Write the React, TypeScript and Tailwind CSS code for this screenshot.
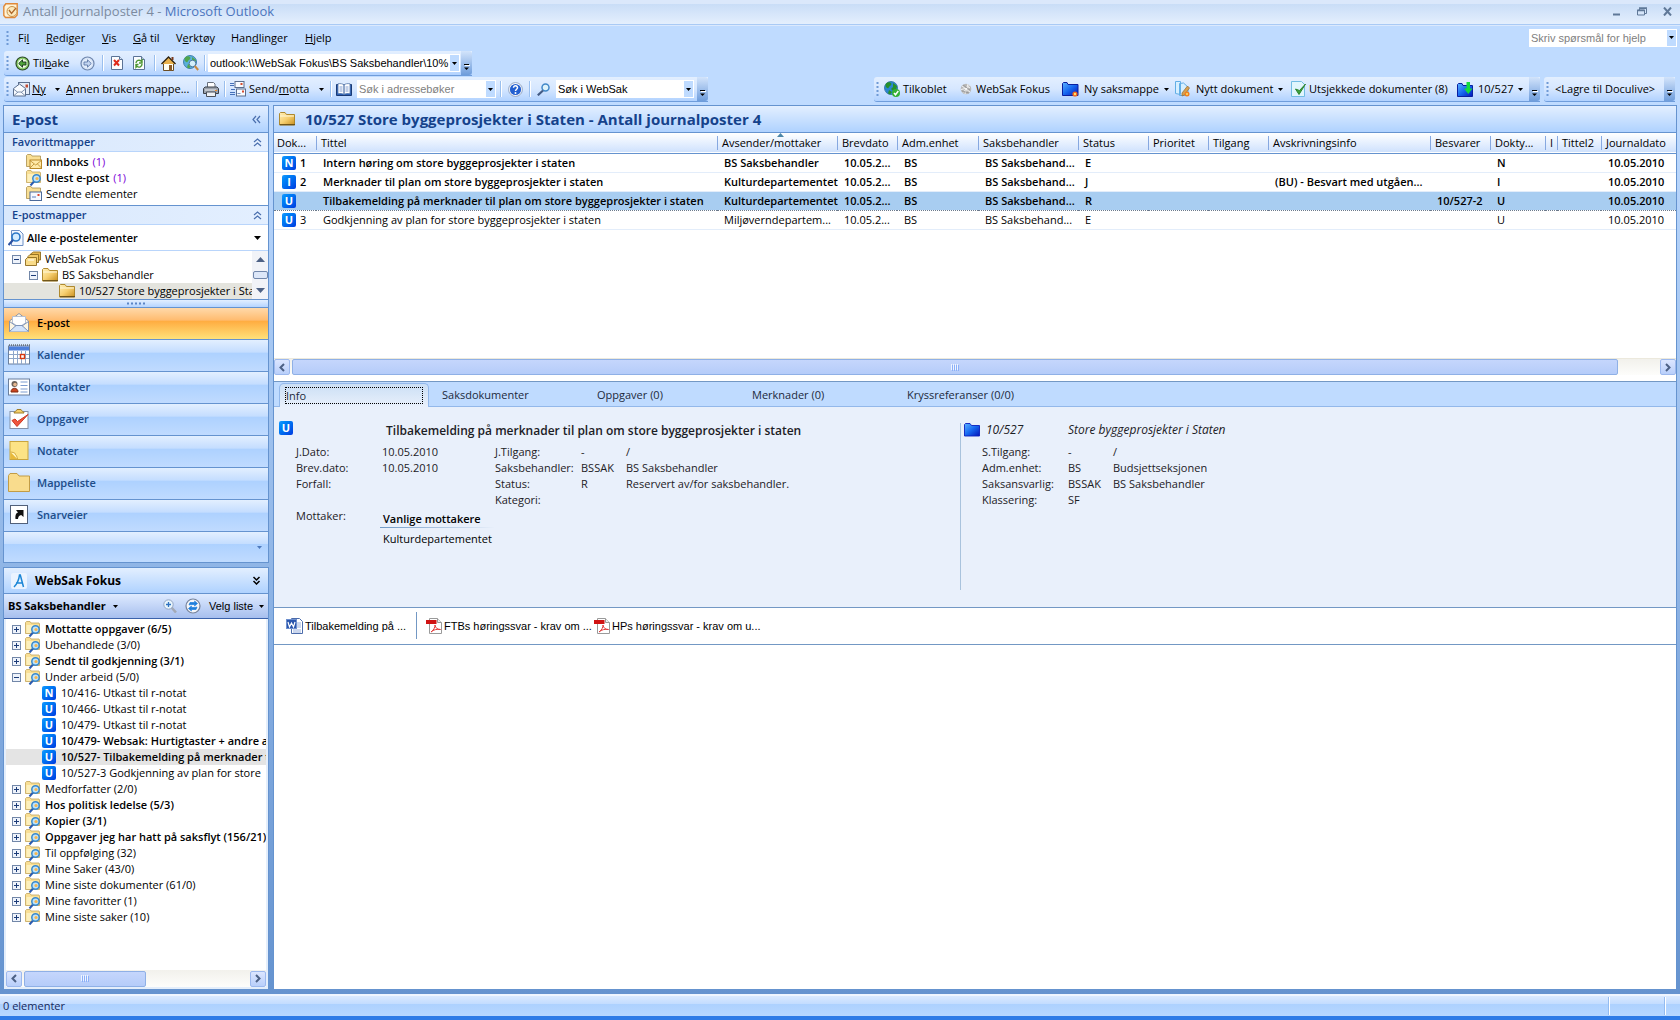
import type { ReactNode } from 'react';

const FolderIcon = ({ blue = false }: { blue?: boolean }) => (
  <svg width="16" height="16" viewBox="0 0 16 16" className="shrink-0">
    <defs>
      <linearGradient id={blue ? 'fb' : 'fy'} x1="0" y1="0" x2="1" y2="1">
        <stop offset="0" stopColor={blue ? '#5db4ff' : '#fff0b8'} />
        <stop offset="0.5" stopColor={blue ? '#1668f0' : '#f6cf70'} />
        <stop offset="1" stopColor={blue ? '#0414b8' : '#c98f1e'} />
      </linearGradient>
    </defs>
    <path
      d="M.5 14V2.5L1.5 1.500h4.500l1.500 2h8v10.500z"
      fill={blue ? 'url(#fb)' : 'url(#fy)'}
      stroke={blue ? '#0a1fc0' : '#a8801f'}
      strokeWidth="0.9"
    />
    {!blue && <path d="M1 5h14" stroke="#fff7d8" />}
    {!blue && <path d="M1 13.700h15" stroke="#5d4610" />}
  </svg>
);

const SearchFolderIcon = () => (
  <svg width="16" height="16" viewBox="0 0 16 16" className="shrink-0">
    <path d="M.5 12.500v-11l1-1H5l1 1.500h8l.5 1v9.500z" fill="#f9df94" stroke="#c2a45a" strokeWidth="0.8" />
    <path d="M1.500 4h11v8h-11z" fill="#fdf0bd" />
    <path d="M8 11.500l-3.500 4" stroke="#2c5bb0" strokeWidth="2" />
    <circle cx="10.500" cy="8.500" r="3.700" fill="#bfe3fb" stroke="#3788cc" strokeWidth="1.500" />
    <circle cx="11" cy="8.500" r="1.600" fill="#f7b64c" />
  </svg>
);

const MailFolderIcon = ({ sent = false }: { sent?: boolean }) => (
  <svg width="16" height="16" viewBox="0 0 16 16" className="shrink-0">
    <path d="M.5 12.500v-11l1-1H5l1 1.500h8.500V12.500z" fill="#f9df94" stroke="#a98f4c" strokeWidth="0.8" />
    <rect x="4" y="6" width="11.500" height="8.500" fill={sent ? '#f6f9ff' : '#ffe9a8'} stroke={sent ? '#4d6b9a' : '#b98a2a'} />
    {sent ? (
      <>
        <path d="M6 11h4" stroke="#5a7fc0" />
        <rect x="11.500" y="8" width="2" height="2" fill="#e0462c" />
      </>
    ) : (
      <path d="M4 6.500l5.700 4.500 5.700-4.500M4 14l4-4M15.500 14l-4-4" fill="none" stroke="#b98a2a" strokeWidth="0.8" />
    )}
  </svg>
);

const StackIcon = () => (
  <svg width="16" height="16" viewBox="0 0 16 16" className="shrink-0">
    <path d="M5.500 9V3l3-2H15.500V9z" fill="#e9b94f" stroke="#8d6b1e" strokeWidth="0.9" />
    <path d="M3 11.500v-6l2-2h8.500v8z" fill="#f2ca68" stroke="#8d6b1e" strokeWidth="0.9" />
    <path d="M.5 14.500v-6l2-2h9v8z" fill="#f9dc8a" stroke="#8d6b1e" strokeWidth="0.9" />
    <path d="M3 9h6" stroke="#fff" />
  </svg>
);

const PageSearchIcon = () => (
  <svg width="16" height="16" viewBox="0 0 16 16" className="shrink-0">
    <path d="M3.500.5h8l3.500 3.500v11.500H3.500z" fill="#f2f7ff" stroke="#6d8fc4" />
    <circle cx="8" cy="7" r="4" fill="#d4ecff" stroke="#2c78c8" strokeWidth="1.600" />
    <path d="M5 10l-4.500 5" stroke="#2b50a0" strokeWidth="2.200" />
  </svg>
);

const BackIcon = ({ forward = false }: { forward?: boolean }) => (
  <svg width="15" height="15" viewBox="0 0 15 15" className="shrink-0">
    <circle cx="7.500" cy="7.500" r="6.500" fill={forward ? '#d7e4f7' : '#8ccf6c'} stroke={forward ? '#6f86ad' : '#2c4a26'} strokeWidth="1.200" />
    <circle cx="7.500" cy="7.500" r="4.600" fill={forward ? '#e4eefb' : '#f1fbe9'} />
    <path
      d={forward ? 'M4 6h3.500V3.800L11.300 7.500 7.500 11.200V9H4z' : 'M11 6H7.500V3.800L3.700 7.500 7.500 11.200V9H11z'}
      fill={forward ? '#c3d5f0' : '#4fa53a'}
      stroke={forward ? '#5d78a8' : '#16321a'}
      strokeWidth="0.9"
    />
  </svg>
);

const PageIcon = ({ kind }: { kind: 'stop' | 'refresh' }) => (
  <svg width="12" height="14" viewBox="0 0 12 14" className="shrink-0">
    <path d="M.5.5h8l3 3v10H.5z" fill="#fbfdff" stroke="#5b7396" />
    <path d="M8.500.5v3h3" fill="#d8e5f6" stroke="#5b7396" />
    {kind === 'stop' ? (
      <path d="M3 4l5 5.500M8 4L3 9.500" stroke="#df2a1b" strokeWidth="2" />
    ) : (
      <path d="M3 7a3 3 0 0 1 5-2l1-1v3H6M9 8a3 3 0 0 1-5 2.300l-1 1V8.500h2.500" fill="none" stroke="#4f9630" strokeWidth="1.400" />
    )}
  </svg>
);

const HouseIcon = () => (
  <svg width="15" height="15" viewBox="0 0 15 15" className="shrink-0">
    <path d="M2.500 7.500h10v7h-10z" fill="#fffef2" stroke="#6b4d23" />
    <path d="M.5 8L7.500 1 14.500 8" fill="#e9b14d" stroke="#2e2412" strokeWidth="1.400" />
    <path d="M10.500 1h2v3h-2z" fill="#7c3b1c" />
    <path d="M8 9h3v5.500H8z" fill="#8b5b28" />
  </svg>
);

const GlobeIcon = ({ check = false }: { check?: boolean }) => (
  <svg width="16" height="16" viewBox="0 0 16 16" className="shrink-0">
    <circle cx="7" cy="7" r="6.500" fill={check ? '#2a86d0' : '#5ab0dc'} stroke="#2a6b9c" strokeWidth="0.8" />
    <path d="M2 2.500C4 .5 7 1 7.500 3 7 5 5 5 4.500 7c-1 1-3-1-3-3zM9 2l4 3-1 4-3 1-2-2 2-2zM5 9l3 2-2 2.500-2-1z" fill={check ? '#26902b' : '#51a64c'} />
    {check ? (
      <>
        <circle cx="12" cy="12" r="4" fill="#34b134" />
        <path d="M10 12l1.500 1.800L14.300 10" fill="none" stroke="#fff" strokeWidth="1.500" />
      </>
    ) : (
      <>
        <circle cx="9.500" cy="8.500" r="3.300" fill="#d4f0fa" stroke="#4f7ba5" />
        <path d="M11.800 11l3.400 4" stroke="#c98a3f" strokeWidth="2" />
      </>
    )}
  </svg>
);

const NewMailIcon = () => (
  <svg width="17" height="15" viewBox="0 0 17 15" className="shrink-0">
    <rect x="5.500" y=".5" width="11" height="12" fill="#e4edf9" stroke="#5b6f8e" />
    <rect x="12.500" y="2.500" width="2.500" height="3" fill="#c24c33" />
    <path d="M.5 6.500L6.500 2l6 4.500v7.500H.5z" fill="#f8fbff" stroke="#5b6f8e" />
    <path d="M.5 14l4.500-4h3l4.500 4M.5 7l4.500 3.500M12.500 7L8 10.500" fill="none" stroke="#7e90ac" />
  </svg>
);

const PrinterIcon = () => (
  <svg width="16" height="15" viewBox="0 0 16 15" className="shrink-0">
    <path d="M4.500 5.500v-5h6l1.500 1.500v3.500z" fill="#fff" stroke="#68707c" />
    <path d="M.5 6.500l1.500-1.500h12l1.500 1.500v5H.5z" fill="#9ba2ac" stroke="#3b4049" />
    <path d="M3.500 10h9v4.500h-9z" fill="#eef1f5" stroke="#4a505a" />
    <path d="M2 8h11" stroke="#e8ebef" />
    <rect x="12" y="8" width="2" height="1" fill="#f28d2a" />
  </svg>
);

const SendReceiveIcon = () => (
  <svg width="16" height="16" viewBox="0 0 16 16" className="shrink-0">
    <rect x="5" y=".5" width="9" height="6" fill="#f8fbff" stroke="#5b6f8e" />
    <rect x="10.500" y="2" width="2" height="2" fill="#d64c2e" />
    <rect x="6.500" y="8" width="9" height="7" fill="#f8fbff" stroke="#5b6f8e" />
    <rect x="12" y="9.500" width="2" height="2" fill="#d64c2e" />
    <path d="M0 2.500h4M0 4.500h4M0 11.500h5M0 13.500h5M1 8.500h4" stroke="#4671b8" />
    <path d="M7.500 12.500h3" stroke="#7b95bf" />
  </svg>
);

const BookIcon = () => (
  <svg width="16" height="13" viewBox="0 0 16 13" className="shrink-0">
    <path d="M.5 1.500h15v11H.5z" fill="#2b5fb4" stroke="#1a3a74" />
    <path d="M2 .8c2.500-.5 5 0 6 1.200v9.500c-1.500-1-4-1.200-6-.8zM14 .8c-2.500-.5-5 0-6 1.200v9.500c1.500-1 4-1.200 6-.8z" fill="#fff" stroke="#5377ac" strokeWidth="0.8" />
    <path d="M3.500 4h3M3.500 6h3M3.500 8h3M9.500 4h3M9.500 6h3M9.500 8h3" stroke="#5f86c6" strokeWidth="0.8" />
  </svg>
);

const HelpIcon = () => (
  <svg width="15" height="15" viewBox="0 0 15 15" className="shrink-0">
    <circle cx="7.500" cy="7.500" r="6.900" fill="#fff" stroke="#7f93b5" strokeWidth="0.8" />
    <circle cx="7.500" cy="7.500" r="5.600" fill="#2460d0" />
    <path d="M5.500 5.800c0-2.800 4.200-2.500 4 0-.1 1.400-2 1.500-2 3.200" fill="none" stroke="#fff" strokeWidth="1.500" />
    <circle cx="7.500" cy="11" r="1" fill="#fff" />
  </svg>
);

const LensIcon = () => (
  <svg width="13" height="13" viewBox="0 0 13 13" className="shrink-0">
    <circle cx="8.500" cy="4.500" r="3.500" fill="#ddf3fb" stroke="#4288c8" strokeWidth="1.500" />
    <path d="M6 7.500L.8 12.300" stroke="#445c86" strokeWidth="2.200" />
  </svg>
);

const GreyBallIcon = () => (
  <svg width="12" height="12" viewBox="0 0 12 12" className="shrink-0">
    <circle cx="6" cy="6" r="5.300" fill="#b9b9b9" />
    <path d="M2 3l8 6M3 9.500L9.500 2M1 6.500l9-2M5 11l3-10" stroke="#f7f7f7" strokeWidth="0.9" />
    <path d="M3 2l7 5M2 8l7 2" stroke="#888" strokeWidth="0.7" />
  </svg>
);

const NewCaseIcon = () => (
  <svg width="17" height="15" viewBox="0 0 17 15" className="shrink-0">
    <path d="M.5 13.500v-12L1.500.5H5l1 2h10v11z" fill="url(#fb)" stroke="#0a1fa0" />
    <circle cx="13" cy="12" r="2.600" fill="#f0641e" />
    <circle cx="13" cy="12" r="1.200" fill="#ffe36a" />
  </svg>
);

const NewDocIcon = () => (
  <svg width="16" height="16" viewBox="0 0 16 16" className="shrink-0">
    <path d="M.5.5h5v13l-5-1zM4.500 2.500l4-.5 4.500 4v8.500H4.500z" fill="#d6efff" stroke="#62aee6" />
    <path d="M12.500 5L7 12v3l2.500-1L14.500 7z" fill="#d9a04e" stroke="#8f6a3b" strokeWidth="0.7" />
    <circle cx="12" cy="13" r="2.500" fill="#f0801e" />
    <circle cx="12" cy="13" r="1" fill="#ffe36a" />
  </svg>
);

const CheckDocIcon = () => (
  <svg width="16" height="16" viewBox="0 0 16 16" className="shrink-0">
    <path d="M.5.500h10l3 3v12H.5z" fill="#e0f5fd" stroke="#72bce4" />
    <path d="M4.500 8l3.500 5.500L14.500 3 8.500 9.500z" fill="#3ea23c" stroke="#2a8430" />
  </svg>
);

const DownFolderIcon = () => (
  <svg width="16" height="15" viewBox="0 0 16 15" className="shrink-0">
    <path d="M.5 14.500v-12l1-1H5l1 2h9.500v11z" fill="url(#fb)" stroke="#0a1fa0" />
    <path d="M9.500 0h3.500v6.500h2.500L11.300 12 7 6.500h2.500z" fill="#12dc3c" />
  </svg>
);

const OutlookIcon = () => (
  <svg width="16" height="16" viewBox="0 0 16 16" className="shrink-0">
    <path d="M.8 12.500v-9l2-2.700h11.400v11.200l-2.500 2.500H2.500z" fill="#fff3d6" stroke="#e0893a" strokeWidth="1.400" />
    <circle cx="9" cy="8.500" r="5" fill="#fbe9bd" stroke="#c9924a" />
    <path d="M6 7l2.500 3.500L13 5" fill="none" stroke="#b0682a" strokeWidth="1.300" />
  </svg>
);

const WordIcon = () => (
  <svg width="17" height="16" viewBox="0 0 17 16" className="shrink-0">
    <path d="M5.500.5h8l3 3v12h-11z" fill="#fff" stroke="#4c6cab" />
    <path d="M11 5h4M11 7h4M11 9h4M7 12h8M7 14h8" stroke="#7c9bd4" strokeWidth="0.8" />
    <rect x=".5" y="1.500" width="10" height="9" fill="#2a56ad" stroke="#6d8fce" />
    <path d="M2 4l1.500 5L5.500 5l2 4L9 4" fill="none" stroke="#fff" strokeWidth="1.200" />
  </svg>
);

const PdfIcon = () => (
  <svg width="16" height="16" viewBox="0 0 16 16" className="shrink-0">
    <path d="M3.500.5h8l4 4v11h-12z" fill="#fff" stroke="#9a9a9a" />
    <path d="M11.500.5v4h4" fill="#eee" stroke="#9a9a9a" />
    <rect x="0" y="2" width="10.500" height="4" fill="#d01313" />
    <path d="M5 14c3-2 4-5 4-7 .3 3 2.500 4.500 5.500 4.500-3.500-.5-7 0-9.500 2.500z" fill="none" stroke="#e23b3b" />
  </svg>
);

const RefreshBallIcon = () => (
  <svg width="16" height="16" viewBox="0 0 16 16" className="shrink-0">
    <circle cx="8" cy="8" r="7" fill="#f4f6fa" stroke="#76839b" strokeWidth="1.200" />
    <path d="M4 7l1-2.500h5L9.500 3l3 2.500-3 2.500.3-1.500H6zM12 9l-1 2.500H6L6.500 13l-3-2.500 3-2.500-.3 1.500H10z" fill="#1f7fdc" stroke="#1f7fdc" strokeWidth="0.7" />
  </svg>
);

const navIcons: Record<string, ReactNode> = {
  'E-post': (
    <>
      <path d="M1.500 9L11 1.500 20.500 9v10.500h-19z" fill="#fdf6e4" stroke="#8c96a8" />
      <path d="M4.500 4.500h13V11l-6.500 4-6.500-4z" fill="#fff" stroke="#b6c0d2" />
      <path d="M1.500 19.500L8 13.500h6l6.500 6M1.500 9.500L8 14M20.500 9.500L14 14" fill="#d2e3fb" stroke="#7d93b8" />
    </>
  ),
  Kalender: (
    <>
      <rect x=".5" y="2" width="21" height="18" fill="#fff" stroke="#6b7f9d" />
      <rect x="1" y="2.500" width="20" height="4" fill="#4d7fdc" />
      <path d="M1 1h21" stroke="#333" strokeDasharray="1 1" />
      <path d="M1 10.500h20M1 14.500h20M5.500 7v13M9.500 7v13M13.500 7v13M17.500 7v13" stroke="#8fa6c9" />
      <rect x="12.500" y="10.500" width="4" height="4" fill="#fff" stroke="#d9380f" strokeWidth="1.400" />
    </>
  ),
  Kontakter: (
    <>
      <rect x=".5" y="3" width="21" height="16" fill="#fff" stroke="#6b7f9d" />
      <circle cx="6.500" cy="8" r="3" fill="#6d6259" />
      <circle cx="7" cy="8.500" r="1.800" fill="#e6b78f" />
      <path d="M3 16c0-5 7-5 7 0z" fill="#cb4420" stroke="#7f2a10" />
      <path d="M12.500 6h7M12.500 9.500h7M12.500 13h7M12.500 16h7" stroke="#7b9bd0" />
    </>
  ),
  Oppgaver: (
    <>
      <rect x="2" y="3.500" width="18" height="17" fill="#fff" stroke="#8491a8" />
      <path d="M6 5c0-2 3-1.500 3-3.500h4C13 3.500 16 3 16 5z" fill="#f5cf6a" stroke="#a37e28" />
      <path d="M4 12.500l5 6L20 6.500l-10.500 7L7 11z" fill="#f0553d" stroke="#cc3a24" />
    </>
  ),
  Notater: (
    <>
      <rect x="2" y="1.500" width="18" height="18" fill="#fce385" stroke="#c9a53e" />
      <path d="M2.500 12l7 7h-7z" fill="#e8b93a" />
      <path d="M2.500 12c4 .5 4.500 1 5 2.500 1 1 1.500 2 2 4.500" fill="#fff3bd" stroke="#d0a63a" />
    </>
  ),
  Mappeliste: (
    <path d="M.5 19.500v-16l1.500-2h7l2 2.500h10.500v15.500z" fill="#f9dc8d" stroke="#c29c46" />
  ),
  Snarveier: (
    <>
      <rect x="2.500" y="1.500" width="17" height="18" fill="#fff" stroke="#51607a" />
      <path d="M7.500 15c-.5-4.500 1-6 2.500-6.500L8 6h7.500v7l-2.300-2c-2 .5-3 1.500-3.200 4z" fill="#111" />
    </>
  ),
};

const Caret = ({ light = false }: { light?: boolean }) => (
  <svg width="5" height="3" viewBox="0 0 5 3" className="shrink-0">
    <path d="M0 0h5L2.500 3z" fill={light ? '#4d79bd' : '#000'} />
  </svg>
);

const Chevrons = ({ dir, dark = false }: { dir: 'up' | 'down' | 'left'; dark?: boolean }) => (
  <svg width="9" height="9" viewBox="0 0 9 9" className="shrink-0">
    <path
      d={dir === 'up' ? 'M1 4l3.500-3L8 4M1 8l3.500-3L8 8' : dir === 'down' ? 'M1.500 1l3 3 3-3M1.500 5l3 3 3-3' : 'M4 1L1 4.500 4 8M8 1L5 4.500 8 8'}
      fill="none"
      stroke={dark ? '#000' : '#4a6fae'}
      strokeWidth={dark ? 1.500 : 1.200}
    />
  </svg>
);

const Grip = () => (
  <svg width="3" height="16" viewBox="0 0 3 16" className="mx-[2px] shrink-0">
    <path d="M1.500 1v2M1.500 5v2M1.500 9v2M1.500 13v2" stroke="#6f9ad6" strokeWidth="2" />
  </svg>
);

const Sep = () => <span className="h-4 w-[2px] shrink-0 border-l border-[#9abfee] bg-white" />;

const ToolbarEnd = () => (
  <button
    aria-label="Alternativer for verktøylinje"
    className="ml-auto flex w-[11px] shrink-0 items-end justify-center self-stretch rounded-r-[3px] bg-linear-to-b from-[#d3e4fb] to-[#6f9ddb] pb-1"
  >
    <svg width="7" height="7" viewBox="0 0 7 7">
      <path d="M1 .5h5" stroke="#000" />
      <path d="M1 3.500h5L3.500 6z" fill="#000" />
      <path d="M2 1.500h5" stroke="#fff" />
    </svg>
  </button>
);

const barClass =
  'flex h-[25px] items-center rounded-l-[3px] border-b border-[#6f9ddb] bg-linear-to-b from-[#e3efff] via-[#d6e7ff] to-[#b1d2ff]';

function Combo({ id, label, value, placeholder, className = '' }: {
  id: string;
  label: string;
  value?: string;
  placeholder?: string;
  className?: string;
}) {
  return (
    <div className={`flex h-[18px] shrink-0 items-stretch bg-white p-px ${className}`}>
      <label htmlFor={id} className="sr-only">{label}</label>
      <input
        id={id}
        defaultValue={value}
        placeholder={placeholder}
        className="min-w-0 flex-1 bg-transparent pl-px font-['Liberation_Sans',sans-serif] text-[11px] leading-4 outline-none placeholder:text-[#808080]"
      />
      <button aria-label={label} className="flex w-[9px] items-center justify-center bg-[#bfdbff]">
        <Caret />
      </button>
    </div>
  );
}

const Badge = ({ letter }: { letter: string }) => (
  <span className="flex size-[14px] shrink-0 items-center justify-center rounded-[2px] bg-linear-to-br from-[#1a9bff] to-[#0038e0] text-[11px] leading-[14px] font-bold text-white">
    {letter}
  </span>
);

const Expander = ({ open }: { open: boolean }) => (
  <button aria-label={open ? 'Skjul' : 'Utvid'} className="size-[9px] shrink-0">
    <svg width="9" height="9" viewBox="0 0 9 9">
      <rect x=".5" y=".5" width="8" height="8" fill="#eef3fb" stroke="#7287a8" />
      <path d={open ? 'M2 4.500h5' : 'M2 4.500h5M4.500 2v5'} stroke="#1c3c78" />
    </svg>
  </button>
);

const ScrollButton = ({ dir }: { dir: 'left' | 'right' }) => (
  <button
    aria-label={dir === 'left' ? 'Rull til venstre' : 'Rull til høyre'}
    className="flex h-4 w-4 shrink-0 items-center justify-center rounded-[2px] border border-[#9db9ee] bg-linear-to-b from-[#dce6ff] to-[#b9cffa]"
  >
    <svg width="6" height="9" viewBox="0 0 6 9">
      <path d={dir === 'left' ? 'M5 1L1.500 4.500 5 8' : 'M1 1l3.500 3.500L1 8'} fill="none" stroke="#4d6185" strokeWidth="2" />
    </svg>
  </button>
);

const ScrollThumb = ({ className }: { className: string }) => (
  <div className={`flex h-4 items-center justify-center rounded-[2px] border border-[#8fb0e6] bg-linear-to-b from-[#c5d6fc] to-[#b5ccf9] ${className}`}>
    <svg width="8" height="7" viewBox="0 0 8 7">
      <path d="M.5 0v6M2.500 0v6M4.500 0v6M6.500 0v6" stroke="#eef4ff" />
      <path d="M1.500 1v6M3.500 1v6M5.500 1v6M7.500 1v6" stroke="#8cb0f8" />
    </svg>
  </div>
);

const menus: { name: ReactNode; width: string }[] = [
  { name: <>Fi<u>l</u></>, width: 'w-7' },
  { name: <><u>R</u>ediger</>, width: 'w-14' },
  { name: <><u>V</u>is</>, width: 'w-[31px]' },
  { name: <><u>G</u>å til</>, width: 'w-[43px]' },
  { name: <>V<u>e</u>rktøy</>, width: 'w-[55px]' },
  { name: <>Han<u>d</u>linger</>, width: 'w-[74px]' },
  { name: <><u>H</u>jelp</>, width: 'w-8' },
];

function TopBars() {
  return (
    <header>
      <div className="flex h-[25px] items-center border-b border-[#a9caf5] bg-[linear-gradient(#dbe8fb_4px,#c9ddf7_4px,#e4effd)] pr-2 pb-[2px] pl-[3px]">
        <OutlookIcon />
        <h1 className="ml-1 text-[13px] leading-4">
          <span className="text-[#7c8b9f]">Antall journalposter 4 - </span>
          <span className="text-[#4b74bd]">Microsoft Outlook</span>
        </h1>
        <div className="ml-auto flex items-center gap-4 text-[#5f7898]">
          <button aria-label="Minimer">
            <svg width="9" height="9" viewBox="0 0 9 9"><path d="M1 7.500h7" stroke="currentColor" strokeWidth="2" /></svg>
          </button>
          <button aria-label="Gjenopprett">
            <svg width="10" height="9" viewBox="0 0 10 9"><path d="M2.500 3V1.500h7v5H8M.5 3h7v5h-7z" fill="none" stroke="currentColor" /><path d="M0 3.500h8M2 1h8" stroke="currentColor" strokeWidth="1.500" /></svg>
          </button>
          <button aria-label="Lukk">
            <svg width="9" height="9" viewBox="0 0 9 9"><path d="M1 .5l7 8M8 .5l-7 8" stroke="currentColor" strokeWidth="2" /></svg>
          </button>
        </div>
      </div>

      <div className="flex h-[26px] items-center border-t border-[#dbe9fd] pb-[2px] pl-1">
        <Grip />
        <nav className="ml-[7px] flex">
          {menus.map((menu, i) => (
            <button key={i} className={`text-left whitespace-nowrap ${menu.width}`}>{menu.name}</button>
          ))}
        </nav>
        <Combo id="help" label="Hjelp" placeholder="Skriv spørsmål for hjelp" className="mr-[3px] ml-auto w-[148px]" />
      </div>

      <div className={`ml-1 w-[468px] ${barClass}`}>
        <Grip />
        <button className="ml-1 flex w-[65px] items-center gap-[3px]"><BackIcon /><span>Til<u>b</u>ake</span></button>
        <button aria-label="Frem" className="mr-[7px]"><BackIcon forward /></button>
        <Sep />
        <button aria-label="Stopp" className="mr-[10px] ml-[7px]"><PageIcon kind="stop" /></button>
        <button aria-label="Oppdater" className="mr-[9px]"><PageIcon kind="refresh" /></button>
        <Sep />
        <button aria-label="Hjem" className="mr-[7px] ml-[5px]"><HouseIcon /></button>
        <button aria-label="Søk på weben" className="mr-[5px]"><GlobeIcon /></button>
        <Sep />
        <Combo id="address" label="Adresse" value="outlook:\\WebSak Fokus\BS Saksbehandler\10%" className="ml-[2px] w-[252px]" />
        <ToolbarEnd />
      </div>

      <div className="mt-px flex pr-[5px] pl-1">
        <div className={`w-[704px] ${barClass}`}>
          <Grip />
          <button className="ml-[2px] flex w-[53px] items-center gap-[2px]"><NewMailIcon /><u>Ny</u><span className="ml-auto pr-[6px]"><Caret /></span></button>
          <button className="w-[130px] text-left whitespace-nowrap"><u>A</u>nnen brukers mappe...</button>
          <Sep />
          <button aria-label="Skriv ut" className="mx-[5px]"><PrinterIcon /></button>
          <Sep />
          <button className="ml-1 flex w-[100px] items-center gap-[3px] whitespace-nowrap"><SendReceiveIcon /><span>Send/<u>m</u>otta</span><span className="ml-auto pr-[6px]"><Caret /></span></button>
          <Sep />
          <button aria-label="Adressebok" className="mx-1"><BookIcon /></button>
          <Combo id="addressbook" label="Søk i adressebøker" placeholder="Søk i adressebøker" className="mr-1 ml-px w-[139px]" />
          <Sep />
          <button aria-label="Hjelp" className="mx-[6px]"><HelpIcon /></button>
          <Sep />
          <button aria-label="Søk" className="mx-[6px]"><LensIcon /></button>
          <Combo id="websak" label="Søk i WebSak" value="Søk i WebSak" className="w-[138px]" />
          <ToolbarEnd />
        </div>
        <div className={`ml-auto w-[666px] whitespace-nowrap ${barClass}`}>
          <Grip />
          <button className="ml-[3px] flex w-[76px] items-center gap-[3px]"><GlobeIcon check />Tilkoblet</button>
          <button className="flex w-[102px] items-center gap-1"><GreyBallIcon />WebSak Fokus</button>
          <button className="flex w-[113px] items-center gap-[5px]"><NewCaseIcon />Ny saksmappe<Caret /></button>
          <button className="flex w-[116px] items-center gap-[5px]"><NewDocIcon />Nytt dokument<Caret /></button>
          <button className="flex w-[166px] items-center gap-[2px]"><CheckDocIcon />Utsjekkede dokumenter (8)</button>
          <button className="flex items-center gap-[5px]"><DownFolderIcon />10/527<Caret /></button>
          <ToolbarEnd />
        </div>
        <div className={`ml-1 w-[131px] whitespace-nowrap ${barClass}`}>
          <Grip />
          <button className="ml-1">&lt;Lagre til Doculive&gt;</button>
          <ToolbarEnd />
        </div>
      </div>
    </header>
  );
}

const navItems = ['E-post', 'Kalender', 'Kontakter', 'Oppgaver', 'Notater', 'Mappeliste', 'Snarveier'];

const SectionTitle = ({ children }: { children: ReactNode }) => (
  <h3 className="flex h-[19px] items-center justify-between border-b border-[#b9d5fb] bg-linear-to-r from-[#d9e8fc] to-[#e3efff] pr-[6px] pl-2 font-semibold text-[#15428b]">
    {children}
    <Chevrons dir="up" />
  </h3>
);

function MailPane() {
  return (
    <section className="border border-[#6593cf] bg-white">
      <h2 className="flex h-[27px] items-center justify-between border-b border-[#6593cf] bg-linear-to-b from-[#e3efff] to-[#afd2ff] pr-[7px] pl-2 text-[15px] font-bold text-[#15428b]">
        E-post
        <Chevrons dir="left" />
      </h2>
      <SectionTitle>Favorittmapper</SectionTitle>
      <ul className="h-[53px] pt-[2px] pl-[22px]">
        <li className="flex h-4 items-center gap-1"><MailFolderIcon /><span className="font-semibold">Innboks</span><span className="text-[#7a00d8]">(1)</span></li>
        <li className="flex h-4 items-center gap-1"><SearchFolderIcon /><span className="font-semibold">Ulest e-post</span><span className="text-[#7a00d8]">(1)</span></li>
        <li className="flex h-4 items-center gap-1"><MailFolderIcon sent />Sendte elementer</li>
      </ul>
      <div className="border-t border-[#6593cf]"><SectionTitle>E-postmapper</SectionTitle></div>
      <button className="flex h-[26px] w-full items-center gap-[3px] border-b border-[#b9d5fb] pr-[7px] pl-1 font-semibold">
        <PageSearchIcon />
        Alle e-postelementer
        <span className="ml-auto"><svg width="7" height="4" viewBox="0 0 7 4"><path d="M0 0h7L3.500 4z" /></svg></span>
      </button>
      <div className="flex h-12">
        <ul className="min-w-0 flex-1 overflow-hidden whitespace-nowrap">
          <li className="flex h-4 items-center gap-1 pl-2"><Expander open /><StackIcon />WebSak Fokus</li>
          <li className="flex h-4 items-center gap-1 pl-[25px]"><Expander open /><FolderIcon />BS Saksbehandler</li>
          <li className="flex h-4 items-center gap-1 bg-[#e4e4de] pl-[55px]"><FolderIcon />10/527 Store byggeprosjekter i Staten</li>
        </ul>
        <div className="flex w-4 flex-col items-center justify-between bg-[#f1f3f8] py-[6px]">
          <svg width="9" height="5" viewBox="0 0 9 5"><path d="M0 5h9L4.500 0z" fill="#4d6185" /></svg>
          <span className="h-2 w-[15px] rounded-[2px] border border-[#7187ab] bg-[#dde7f8]" />
          <svg width="9" height="5" viewBox="0 0 9 5"><path d="M0 0h9L4.500 5z" fill="#4d6185" /></svg>
        </div>
      </div>
      <div className="flex h-[9px] items-center justify-center border-y border-[#6593cf] bg-linear-to-b from-[#e3efff] to-[#b5d4ff]">
        <svg width="20" height="3" viewBox="0 0 20 3"><path d="M1 1.500h19" stroke="#5c85c6" strokeWidth="2" strokeDasharray="2 2" /></svg>
      </div>
      <nav>
        {navItems.map((name) => (
          <button
            key={name}
            className={`flex h-8 w-full items-center gap-[7px] border-b border-[#6593cf] pb-px pl-1 font-semibold ${
              name === 'E-post'
                ? 'bg-[linear-gradient(#ffd9aa,#ffbb6e_40%,#ffab3f_41%,#fee17a)] text-black'
                : 'bg-[linear-gradient(#e3efff,#c4ddff_40%,#add1ff_41%,#c0dbff)] text-[#204d89]'
            }`}
          >
            <svg width="22" height="22" viewBox="0 0 22 22">{navIcons[name]}</svg>
            {name}
          </button>
        ))}
        <div className="flex h-[30px] items-center justify-end bg-[linear-gradient(#e3efff,#c4ddff_40%,#add1ff_41%,#c0dbff)] pr-[6px]">
          <button aria-label="Konfigurer knapper"><Caret light /></button>
        </div>
      </nav>
    </section>
  );
}

type TreeRow = { text: string; bold?: boolean; badge?: string; open?: boolean; selected?: boolean };

const websakTree: TreeRow[] = [
  { text: 'Mottatte oppgaver (6/5)', bold: true },
  { text: 'Ubehandlede (3/0)' },
  { text: 'Sendt til godkjenning (3/1)', bold: true },
  { text: 'Under arbeid (5/0)', open: true },
  { text: '10/416- Utkast til r-notat', badge: 'N' },
  { text: '10/466- Utkast til r-notat', badge: 'U' },
  { text: '10/479- Utkast til r-notat', badge: 'U' },
  { text: '10/479- Websak: Hurtigtaster + andre av', bold: true, badge: 'U' },
  { text: '10/527- Tilbakemelding på merknader til', bold: true, badge: 'U', selected: true },
  { text: '10/527-3 Godkjenning av plan for store', badge: 'U' },
  { text: 'Medforfatter (2/0)' },
  { text: 'Hos politisk ledelse (5/3)', bold: true },
  { text: 'Kopier (3/1)', bold: true },
  { text: 'Oppgaver jeg har hatt på saksflyt (156/21)', bold: true },
  { text: 'Til oppfølging (32)' },
  { text: 'Mine Saker (43/0)' },
  { text: 'Mine siste dokumenter (61/0)' },
  { text: 'Mine favoritter (1)' },
  { text: 'Mine siste saker (10)' },
];

function WebsakPane() {
  return (
    <section className="mt-1 flex flex-1 flex-col border border-[#6593cf] bg-white">
      <h2 className="flex h-[26px] items-center border-b border-[#6593cf] bg-linear-to-b from-[#e3efff] to-[#afd2ff] pr-[7px] pl-[7px] text-[12px] font-bold">
        <svg width="16" height="16" viewBox="0 0 16 16" className="mr-2">
          <rect width="16" height="16" rx="2" fill="#eaf3ff" />
          <path d="M3 14C6 11 8 6 8.500 2h.800l3.200 12M5 10h6.500" fill="none" stroke="#1b86d6" strokeWidth="1.500" />
        </svg>
        WebSak Fokus
        <span className="ml-auto"><Chevrons dir="down" dark /></span>
      </h2>
      <div className="flex h-[25px] items-center border-b border-[#3b62ab] bg-linear-to-b from-[#dfebff] to-[#a7bfee] pr-1 pl-1">
        <button className="flex items-center gap-[7px] font-bold whitespace-nowrap">BS Saksbehandler <Caret /></button>
        <button aria-label="Zoom" className="mr-2 ml-auto">
          <svg width="14" height="14" viewBox="0 0 14 14"><path d="M8.500 8.500l4.500 5" stroke="#a3a9b5" strokeWidth="2.500" /><circle cx="5.500" cy="5.500" r="4.700" fill="#e8f5fc" stroke="#93a5c2" /><path d="M3 5.500h5M5.500 3v5" stroke="#2f73c0" strokeWidth="1.300" /></svg>
        </button>
        <button aria-label="Oppdater liste" className="mr-2"><RefreshBallIcon /></button>
        <button className="flex items-center gap-[6px] font-['Liberation_Sans',sans-serif] whitespace-nowrap">Velg liste <Caret /></button>
      </div>
      <div className="flex flex-1 flex-col border-2 border-t-0 border-[#e4eefb] bg-white">
        <ul className="overflow-hidden pt-[2px] whitespace-nowrap">
          {websakTree.map((row) => (
            <li
              key={row.text}
              className={`flex h-4 items-center ${row.bold ? 'font-semibold' : ''} ${row.selected ? 'bg-[#e4e4e4]' : ''} ${row.badge ? 'gap-[5px] pl-9' : 'gap-1 pl-[6px]'}`}
            >
              {row.badge ? <Badge letter={row.badge} /> : <><Expander open={!!row.open} /><SearchFolderIcon /></>}
              {row.text}
            </li>
          ))}
        </ul>
        <div className="mt-auto flex h-[17px] items-center gap-[2px] bg-linear-to-b from-[#f2f1ec] to-[#fdfdfb]">
          <ScrollButton dir="left" />
          <ScrollThumb className="w-[122px]" />
          <span className="ml-auto flex"><ScrollButton dir="right" /></span>
        </div>
      </div>
    </section>
  );
}

const columns = [
  { name: 'Dok...', width: 'w-[42px]' },
  { name: 'Tittel', width: '' },
  { name: 'Avsender/mottaker', width: 'w-[120px]' },
  { name: 'Brevdato', width: 'w-[60px]' },
  { name: 'Adm.enhet', width: 'w-[81px]' },
  { name: 'Saksbehandler', width: 'w-[100px]' },
  { name: 'Status', width: 'w-[70px]' },
  { name: 'Prioritet', width: 'w-[60px]' },
  { name: 'Tilgang', width: 'w-[60px]' },
  { name: 'Avskrivningsinfo', width: 'w-[162px]' },
  { name: 'Besvarer', width: 'w-[60px]' },
  { name: 'Dokty...', width: 'w-[55px]' },
  { name: 'I', width: 'w-3' },
  { name: 'Tittel2', width: 'w-11' },
  { name: 'Journaldato', width: 'w-[75px]' },
];

const posts = [
  { type: 'N', no: '1', bold: true, cells: ['Intern høring om store byggeprosjekter i staten', 'BS Saksbehandler', '10.05.2...', 'BS', 'BS Saksbehand...', 'E', '', '', '', '', 'N', '', '', '10.05.2010'] },
  { type: 'I', no: '2', bold: true, cells: ['Merknader til plan om store byggeprosjekter i staten', 'Kulturdepartementet', '10.05.2...', 'BS', 'BS Saksbehand...', 'J', '', '', '(BU) - Besvart med utgåen...', '', 'I', '', '', '10.05.2010'] },
  { type: 'U', no: '', bold: true, selected: true, cells: ['Tilbakemelding på merknader til plan om store byggeprosjekter i staten', 'Kulturdepartementet', '10.05.2...', 'BS', 'BS Saksbehand...', 'R', '', '', '', '10/527-2', 'U', '', '', '10.05.2010'] },
  { type: 'U', no: '3', cells: ['Godkjenning av plan for store byggeprosjekter i staten', 'Miljøverndepartem...', '10.05.2...', 'BS', 'BS Saksbehand...', 'E', '', '', '', '', 'U', '', '', '10.05.2010'] },
];

function PostList() {
  return (
    <>
      <h2 className="flex h-[27px] items-center gap-[10px] border-b border-[#6593cf] bg-linear-to-b from-[#e3efff] to-[#afd2ff] pl-[5px] text-[15px] font-bold text-[#15428b]">
        <FolderIcon />
        10/527 Store byggeprosjekter i Staten - Antall journalposter 4
      </h2>
      <div className="h-[225px]">
        <table className="w-full table-fixed border-collapse text-left whitespace-nowrap">
          <thead>
            <tr className="h-5 border-b border-[#6593cf] bg-linear-to-b from-white to-[#cfe2fd]">
              {columns.map((col, i) => (
                <th key={col.name} className={`relative overflow-hidden p-0 font-normal ${col.width}`}>
                  <span className={`block h-[14px] leading-[14px] ${i === 0 ? 'pl-[3px]' : 'border-l border-[#86a8e0] pl-1'}`}>{col.name}</span>
                  {col.name === 'Avsender/mottaker' && (
                    <svg width="7" height="4" viewBox="0 0 7 4" className="absolute top-0 left-1/2"><path d="M0 4h7L3.500 0z" fill="#4c86a8" /></svg>
                  )}
                </th>
              ))}
            </tr>
          </thead>
          <tbody>
            {posts.map((post, row) => (
              <tr
                key={row}
                className={`h-[19px] border-b ${post.bold ? 'font-semibold' : ''} ${
                  post.selected ? 'border-t border-dotted border-[#6c7a8c] bg-[#a8cdf1]' : 'border-[#e3edfa]'
                }`}
              >
                <td className="p-0">
                  <span className="flex items-center gap-1 pl-2"><Badge letter={post.type} />{post.no}</span>
                </td>
                {post.cells.map((cell, i) => (
                  <td key={i} className="p-0 pl-[7px] leading-4">{cell}</td>
                ))}
              </tr>
            ))}
          </tbody>
        </table>
      </div>
      <div className="flex h-[17px] items-center gap-[2px] border-t border-[#ece9dd] bg-linear-to-b from-[#f2f1ec] to-[#fdfdfb]">
        <ScrollButton dir="left" />
        <ScrollThumb className="mr-10 flex-1" />
        <ScrollButton dir="right" />
      </div>
    </>
  );
}

const tabs = ['Saksdokumenter', 'Oppgaver (0)', 'Merknader (0)', 'Kryssreferanser (0/0)'];

const postFields = [
  ['J.Dato:', '10.05.2010', 'J.Tilgang:', '-', '/'],
  ['Brev.dato:', '10.05.2010', 'Saksbehandler:', 'BSSAK', 'BS Saksbehandler'],
  ['Forfall:', '', 'Status:', 'R', 'Reservert av/for saksbehandler.'],
  ['', '', 'Kategori:', '', ''],
];

const caseFields = [
  ['S.Tilgang:', '-', '/'],
  ['Adm.enhet:', 'BS', 'Budsjettseksjonen'],
  ['Saksansvarlig:', 'BSSAK', 'BS Saksbehandler'],
  ['Klassering:', 'SF', ''],
];

function InfoPane() {
  return (
    <>
      <div role="tablist" className="mt-[6px] flex h-[26px] items-end border-y border-t-[#7398c4] border-b-[#93b8ea] bg-[#bfdbff] pl-[5px] text-[#1c2a3c]">
        <button role="tab" aria-selected className="-mb-px h-6 w-[150px] rounded-t-[5px] border border-b-0 border-[#93b8ea] bg-linear-to-b from-[#cbdff5] to-[#e9f0fb] px-[5px] text-left">
          <span className="block border border-dotted border-black leading-[15px]">Info</span>
        </button>
        {tabs.map((tab) => (
          <button role="tab" key={tab} className="h-6 w-[155px] pt-[2px] pl-[13px] text-left">{tab}</button>
        ))}
      </div>

      <div className="flex h-[200px] bg-[#e9f0fb] text-[#1c2025]">
        <div className="w-[686px] pt-[14px] pl-[5px]">
          <div className="flex h-[22px] items-start">
            <Badge letter="U" />
            <h3 className="ml-[93px] pt-[2px] text-[12px] leading-4 font-semibold">Tilbakemelding på merknader til plan om store byggeprosjekter i staten</h3>
          </div>
          <dl className="pt-px pl-[17px]">
            {postFields.map((row) => (
              <div key={row[2]} className="grid h-4 grid-cols-[86px_113px_86px_45px_1fr] items-center whitespace-nowrap">
                <dt>{row[0]}</dt>
                <dd>{row[1]}</dd>
                <dt>{row[2]}</dt>
                <dd>{row[3]}</dd>
                <dd>{row[4]}</dd>
              </div>
            ))}
            <div className="flex">
              <dt className="w-[84px] leading-4">Mottaker:</dt>
              <dd>
                <p className="pt-[3px] pl-[3px] leading-4 font-semibold text-black">Vanlige mottakere</p>
                <div className="h-px w-[115px] bg-linear-to-r from-[#6f9ac6] to-transparent" />
                <p className="pt-[3px] pl-[3px] leading-4 text-black">Kulturdepartementet</p>
              </dd>
            </div>
          </dl>
        </div>
        <div className="mt-4 mb-[17px] flex-1 border-l border-[#a9c3dd] pl-[3px]">
          <div className="-mt-1 flex h-[22px] items-center text-[12px] leading-4 italic">
            <FolderIcon blue />
            <span className="ml-[6px] w-[82px]">10/527</span>
            Store byggeprosjekter i Staten
          </div>
          <dl className="pt-[3px] pl-[18px]">
            {caseFields.map((row) => (
              <div key={row[0]} className="grid h-4 grid-cols-[86px_45px_1fr] items-center whitespace-nowrap">
                <dt>{row[0]}</dt>
                <dd>{row[1]}</dd>
                <dd>{row[2]}</dd>
              </div>
            ))}
          </dl>
        </div>
      </div>

      <div className="flex h-[38px] items-center border-y border-[#7398c4] pb-px pl-3 font-['Liberation_Sans',sans-serif] whitespace-nowrap">
        <button className="flex w-[130px] items-center gap-[2px]"><WordIcon />Tilbakemelding på ...</button>
        <span className="mr-[9px] h-[27px] w-px bg-[#7398c4]" />
        <button className="flex w-[168px] items-center gap-[2px]"><PdfIcon />FTBs høringssvar - krav om ...</button>
        <button className="flex items-center gap-[2px]"><PdfIcon />HPs høringssvar - krav om u...</button>
      </div>
    </>
  );
}

export default function App() {
  return (
    <div className="flex min-h-screen flex-col bg-[#bfdbff] font-['Open_Sans','Noto_Sans',sans-serif] text-[11px] leading-4 text-black">
      <TopBars />
      <main className="mt-[3px] flex flex-1 gap-1 bg-linear-to-b from-[#bfdbff] to-[#6593cf] px-[3px] pb-1">
        <aside className="flex w-[266px] shrink-0 flex-col">
          <MailPane />
          <WebsakPane />
        </aside>
        <div className="min-w-0 flex-1 border border-[#6593cf] bg-white">
          <PostList />
          <InfoPane />
        </div>
      </main>
      <footer className="flex h-[26px] items-stretch border-t-2 border-b-4 border-t-[#eef5ff] border-b-[#2f7be6] bg-[linear-gradient(#d9e9ff,#c4ddff_38%,#add1ff_39%,#b8d7ff)] pl-[3px] text-[#15285c]">
        <span className="self-center">0 elementer</span>
        <span className="my-px mr-[54px] ml-auto w-[2px] border-l border-[#93bbf0] bg-white" />
        <span className="my-px mr-[14px] w-[2px] border-l border-[#93bbf0] bg-white" />
      </footer>
    </div>
  );
}
